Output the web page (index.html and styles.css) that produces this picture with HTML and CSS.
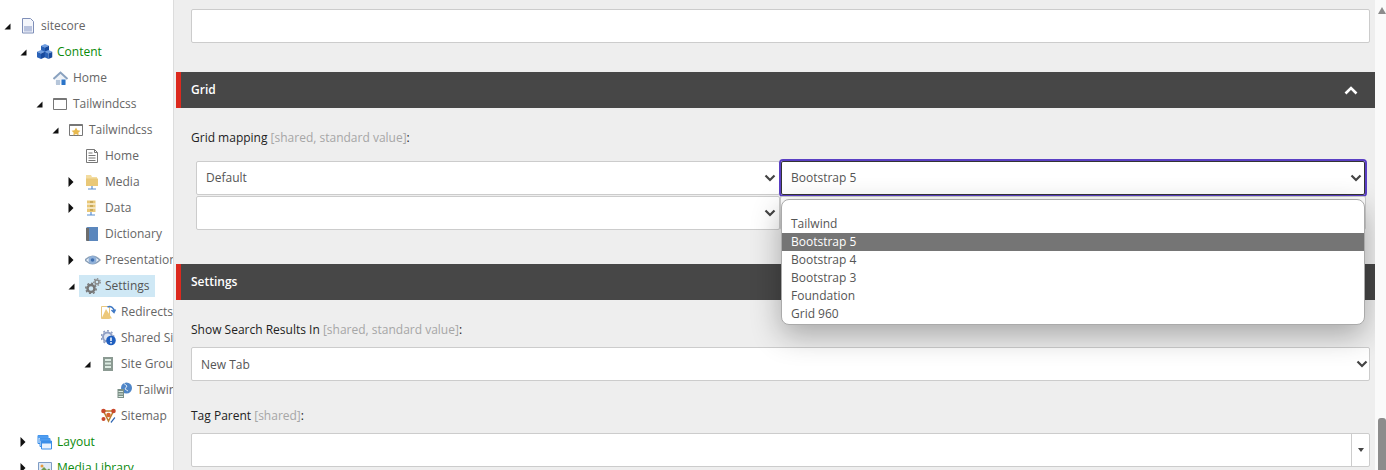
FILE: index.html
```html
<!DOCTYPE html>
<html lang="en">
<head>
    <meta charset="UTF-8">
    <meta name="viewport" content="width=device-width, initial-scale=1.0">
    <title>Content Editor</title>
    <link rel="stylesheet" href="styles.css">
</head>
<body>
<svg class="defs" width="0" height="0">
    <symbol id="chev-down" viewBox="0 0 12 8"><path d="M1.500 1.500 6 6l4.500-4.500" fill="none" stroke="#444" stroke-width="2.200"/></symbol>
    <symbol id="chev-up" viewBox="0 0 14 9"><path d="M1.500 7.500 7 2l5.500 5.500" fill="none" stroke="#fff" stroke-width="2.600"/></symbol>
    <symbol id="open" viewBox="0 0 7 7"><path d="M6.500 0.500v6h-6z" fill="#111"/></symbol>
    <symbol id="closed" viewBox="0 0 6 10"><path d="M0.500 0 5.500 5 0.500 10z" fill="#111"/></symbol>
    <symbol id="stand" viewBox="0 0 16 16"><path d="M8 12v3M4 15h8" stroke="#5b8fd0" stroke-width="1.200" fill="none"/></symbol>
    <symbol id="cube" viewBox="0 0 8 9"><path d="M4 0l4 1.700-4 1.700-4-1.700z" fill="#6f9de0"/><path d="M0 1.700l4 1.700V9L0 7.300z" fill="#2a62b8"/><path d="M8 1.700L4 3.400V9l4-1.700z" fill="#174a9e"/></symbol>
</svg>

<div class="page">
    <!-- content tree -->
    <nav class="tree">
        <div class="row level-0">
            <span class="toggle"><svg width="7" height="7"><use href="#open"/></svg></span>
            <span class="node"><svg width="16" height="16" viewBox="0 0 16 16"><path d="M1.500 0.500h8l3 3v11.500h-11z" fill="#f4f6fb" stroke="#7f8fb8"/><path d="M3 8h8v5.500H3z" fill="#b9c3de"/></svg>sitecore</span>
        </div>
        <div class="row level-1">
            <span class="toggle"><svg width="7" height="7"><use href="#open"/></svg></span>
            <span class="node green"><svg width="16" height="16" viewBox="0 0 16 16"><use href="#cube" x="4" y="0" width="8" height="9"/><use href="#cube" x="0" y="6" width="8" height="9"/><use href="#cube" x="7.500" y="6" width="8" height="9"/></svg>Content</span>
        </div>
        <div class="row level-2">
            <span class="toggle"></span>
            <span class="node"><svg width="16" height="16" viewBox="0 0 16 16"><path d="M2.500 8 7.500 3.500 13 8v6H2.500z" fill="#eef2f7"/><path d="M0.500 9 7.500 2.500 14.500 9" fill="none" stroke="#8aa2bf" stroke-width="2"/><path d="M8.500 9.500h4V15h-4z" fill="#2b74c8"/><path d="M3 10h4v5H3z" fill="#b6c6da"/></svg>Home</span>
        </div>
        <div class="row level-2">
            <span class="toggle"><svg width="7" height="7"><use href="#open"/></svg></span>
            <span class="node"><svg width="16" height="16" viewBox="0 0 16 16"><path d="M0.500 2.500h13v11h-13z" fill="#fff" stroke="#777"/><path d="M0.500 2.500h13v1.500H0.500z" fill="#777"/></svg>Tailwindcss</span>
        </div>
        <div class="row level-3">
            <span class="toggle"><svg width="7" height="7"><use href="#open"/></svg></span>
            <span class="node"><svg width="16" height="16" viewBox="0 0 16 16"><path d="M0.500 2.500h13v11h-13z" fill="#fff" stroke="#777"/><path d="M0.500 2.500h13v1.500H0.500z" fill="#777"/><path d="m7 5.500 1.500 2.800 2.900.4-2.100 2 .5 2.800L7 12.100l-2.800 1.400.5-2.800-2.100-2 2.900-.4z" fill="#e8b94e"/></svg>Tailwindcss</span>
        </div>
        <div class="row level-4">
            <span class="toggle"></span>
            <span class="node"><svg width="16" height="16" viewBox="0 0 16 16"><path d="M1.500 1.500h8l3 3v10h-11z" fill="#fff" stroke="#777"/><path d="M9.500 1.500v3h3M3.500 5h4M3.500 7.500h7M3.500 10h7M3.500 12.500h7" fill="none" stroke="#777"/></svg>Home</span>
        </div>
        <div class="row level-4">
            <span class="toggle"><svg width="6" height="10"><use href="#closed"/></svg></span>
            <span class="node"><svg width="16" height="16" viewBox="0 0 16 16"><path d="M1 1h5l1 2h5v9H1z" fill="#f3dca0"/><path d="M1 4.500h12v7.500H1z" fill="#e9c878"/><use href="#stand" x="-1" width="16" height="16"/></svg>Media</span>
        </div>
        <div class="row level-4">
            <span class="toggle"><svg width="6" height="10"><use href="#closed"/></svg></span>
            <span class="node"><svg width="16" height="16" viewBox="0 0 16 16"><path d="M2 0.500h8.500v11.500H2z" fill="#e9c878"/><path d="M2 4h8.500M2 8h8.500" stroke="#fff"/><path d="M5 2h3M5 6h3M5 10h3" stroke="#a98a3a"/><use href="#stand" x="-2" width="16" height="16"/></svg>Data</span>
        </div>
        <div class="row level-4">
            <span class="toggle"></span>
            <span class="node"><svg width="16" height="16" viewBox="0 0 16 16"><path d="M1 2.500Q1 1 2.500 1H13v14H2.500Q1 15 1 13.500z" fill="#5b87bd"/><path d="M1 2h3v13H2.500Q1 15 1 13.500z" fill="#6d6d6d"/></svg>Dictionary</span>
        </div>
        <div class="row level-4">
            <span class="toggle"><svg width="6" height="10"><use href="#closed"/></svg></span>
            <span class="node"><svg width="16" height="16" viewBox="0 0 16 16"><path d="M0 8Q7.500 0.500 15 8 7.500 15.500 0 8z" fill="#eef3fa" stroke="#8ba0b8" stroke-width="1.400"/><circle cx="7.500" cy="8" r="4" fill="#8fb0d8"/><circle cx="7.500" cy="8" r="1.800" fill="#3f6fb0"/></svg>Presentation</span>
        </div>
        <div class="row level-4">
            <span class="toggle"><svg width="7" height="7"><use href="#open"/></svg></span>
            <span class="node selected"><svg width="16" height="16" viewBox="0 0 16 16"><circle cx="6" cy="10.500" r="3.500" fill="none" stroke="#777" stroke-width="2.500"/><circle cx="6" cy="10.500" r="5.200" fill="none" stroke="#777" stroke-width="1.500" stroke-dasharray="2 2"/><circle cx="12" cy="4" r="2" fill="none" stroke="#888" stroke-width="1.500"/><circle cx="12" cy="4" r="3.300" fill="none" stroke="#888" stroke-width="1.200" stroke-dasharray="1.500 1.500"/></svg>Settings</span>
        </div>
        <div class="row level-5">
            <span class="toggle"></span>
            <span class="node"><svg width="16" height="16" viewBox="0 0 16 16"><path d="M0.500 2.500h8v12h-8z" fill="#fff" stroke="#e8c880"/><path d="M0.500 14.500 5 5l6 9.500z" fill="#edc97a"/><path d="M6.500 3a4.500 4.500 0 0 1 6.500 4.500M14.500 5.500l-1.500 3-2.500-2.500" fill="none" stroke="#3f78c4" stroke-width="1.500"/></svg>Redirects</span>
        </div>
        <div class="row level-5">
            <span class="toggle"></span>
            <span class="node"><svg width="16" height="16" viewBox="0 0 16 16"><circle cx="6.500" cy="7" r="4.500" fill="#dfe5f2" stroke="#8f9fc4" stroke-width="2"/><circle cx="6.500" cy="7" r="6.200" fill="none" stroke="#8f9fc4" stroke-width="1.500" stroke-dasharray="2 2"/><circle cx="10" cy="10.500" r="4.800" fill="#1f5fc0"/><path d="M10 7.500v3.500M10 12v1.500" stroke="#fff" stroke-width="1.500"/></svg>Shared Site</span>
        </div>
        <div class="row level-5">
            <span class="toggle"><svg width="7" height="7"><use href="#open"/></svg></span>
            <span class="node"><svg width="16" height="16" viewBox="0 0 16 16"><path d="M2 1h10v14H2z" fill="#8b9a92"/><path d="M4 3h6v2H4zM4 6.500h6v2H4zM4 10h6v2H4z" fill="#dcebe2"/></svg>Site Group</span>
        </div>
        <div class="row level-6">
            <span class="toggle"></span>
            <span class="node"><svg width="16" height="16" viewBox="0 0 16 16"><circle cx="9.500" cy="6" r="5.500" fill="#4f86c8"/><path d="M7 1.500 10 4 8 7l3 2" fill="none" stroke="#dce8f5"/><path d="M0.500 7h6.500v9H0.500z" fill="#7b8f86"/><path d="M1.500 9h4.500v1H1.500zM1.500 11.500h4.500v1H1.500zM1.500 14h4.500v1H1.500z" fill="#dcebe2"/></svg>Tailwind</span>
        </div>
        <div class="row level-5">
            <span class="toggle"></span>
            <span class="node"><svg width="16" height="16" viewBox="0 0 16 16"><path d="M2.500 3h10L7.500 13z" fill="none" stroke="#b9812f" stroke-width="1.500"/><circle cx="2.500" cy="3" r="2.300" fill="#c9492c"/><circle cx="12.500" cy="3" r="2.300" fill="#c9492c"/><circle cx="7.500" cy="7" r="2.300" fill="#d8622f"/><circle cx="2.500" cy="11" r="2" fill="#c9492c"/><path d="m9.500 14 4-5 .8 1-4 5z" fill="#2b62b0"/></svg>Sitemap</span>
        </div>
        <div class="row level-1">
            <span class="toggle"><svg width="6" height="10"><use href="#closed"/></svg></span>
            <span class="node green"><svg width="16" height="16" viewBox="0 0 16 16"><path d="M1 1.500h10v8H1z" fill="#e8f2fd" stroke="#3a8ee8"/><path d="M1 1.500h10v2.500H1z" fill="#4f9df0"/><path d="M3 4.500h10v8H3z" fill="#e8f2fd" stroke="#3a8ee8"/><path d="M3 4.500h10v2.500H3z" fill="#4f9df0"/><path d="M4.500 7h10v8h-10z" fill="#e8f2fd" stroke="#3a8ee8"/><path d="M4.500 7h10v2.500h-10z" fill="#3a8ee8"/></svg>Layout</span>
        </div>
        <div class="row level-1">
            <span class="toggle"><svg width="6" height="10"><use href="#closed"/></svg></span>
            <span class="node green"><svg width="16" height="16" viewBox="0 0 16 16"><path d="M1.500 2.500h13v11h-13z" fill="#dfe9f5" stroke="#7f9cc4"/><path d="M3 11 7 7l3 3 2-1.500 2 2.500v1.500H3z" fill="#6f9a4e"/><circle cx="5" cy="6" r="1.500" fill="#e89a3a"/></svg>Media Library</span>
        </div>
    </nav>

    <!-- editor -->
    <main class="editor">
        <div class="field top-field"></div>

        <section class="section">
            <div class="section-head">
                <span>Grid</span>
                <svg width="14" height="9"><use href="#chev-up"/></svg>
            </div>
            <div class="section-body">
                <div class="label">Grid mapping <span class="muted">[shared, standard value]</span>:</div>
                <div class="mapping">
                    <div class="field select">Default<svg width="12" height="8"><use href="#chev-down"/></svg></div>
                    <div class="field select focused">Bootstrap 5<svg width="12" height="8"><use href="#chev-down"/></svg>
                        <ul class="dropdown">
                            <li>Tailwind</li>
                            <li class="active">Bootstrap 5</li>
                            <li>Bootstrap 4</li>
                            <li>Bootstrap 3</li>
                            <li>Foundation</li>
                            <li>Grid 960</li>
                        </ul>
                    </div>
                    <div class="field select"><svg width="12" height="8"><use href="#chev-down"/></svg></div>
                    <div class="field select"><svg width="12" height="8"><use href="#chev-down"/></svg></div>
                </div>
            </div>
        </section>

        <section class="section">
            <div class="section-head">
                <span>Settings</span>
            </div>
            <div class="section-body">
                <div class="label">Show Search Results In <span class="muted">[shared, standard value]</span>:</div>
                <div class="field select wide"><span class="value">New Tab</span><svg width="12" height="8"><use href="#chev-down"/></svg></div>
                <div class="label next">Tag Parent <span class="muted">[shared]</span>:</div>
                <div class="field combo">
                    <span class="combo-btn"></span>
                </div>
            </div>
        </section>
    </main>

    <div class="scrollbar">
        <span class="scroll-up"></span>
        <span class="scroll-thumb"></span>
    </div>
</div>
</body>
</html>
```

FILE: styles.css
```css
html, body {
    margin: 0;
    padding: 0;
    height: 470px;
    overflow: hidden;
}
body {
    font-family: "Open Sans", "Liberation Sans", sans-serif;
    font-size: 12px;
    line-height: 16px;
    color: #222;
    background-color: #fff;
}
.defs {
    position: absolute;
}
.page {
    display: flex;
    height: 470px;
}

/* tree */
.tree {
    width: 173px;
    height: 470px;
    flex-shrink: 0;
    padding-top: 13px;
    box-sizing: border-box;
    overflow: hidden;
    background-color: #fff;
    color: #666;
}
.row {
    display: flex;
    align-items: center;
    height: 26px;
    white-space: nowrap;
}
.level-0 { padding-left: 0; }
.level-1 { padding-left: 16px; }
.level-2 { padding-left: 32px; }
.level-3 { padding-left: 48px; }
.level-4 { padding-left: 64px; }
.level-5 { padding-left: 80px; }
.level-6 { padding-left: 96px; }
.toggle {
    width: 15px;
    flex-shrink: 0;
    display: flex;
    align-items: center;
    padding-left: 4px;
    box-sizing: border-box;
}
.node {
    display: flex;
    align-items: center;
    gap: 4px;
    height: 22px;
    padding: 0 5px 0 6px;
}
.node svg {
    flex-shrink: 0;
}
.green {
    color: #0a8a0a;
}
.selected {
    background-color: #cfe8f5;
    color: #555;
}

/* editor */
.editor {
    flex: 1;
    min-width: 0;
    height: 470px;
    padding: 9px 0 0 2px;
    box-sizing: border-box;
    overflow: hidden;
    background-color: #eee;
    border-left: 1px solid #dcdcdc;
}
.field {
    height: 34px;
    box-sizing: border-box;
    background-color: #fff;
    border: 1px solid #ccc;
    border-radius: 2px;
}
.top-field {
    margin: 0 5px 29px 15px;
}
.section-head {
    display: flex;
    justify-content: space-between;
    align-items: center;
    height: 36px;
    padding: 0 17px 0 10px;
    box-sizing: border-box;
    background-color: #474747;
    border-left: 5px solid #dc291e;
    color: #fff;
    font-weight: 600;
}
.section-body {
    padding: 22px 5px 34px 15px;
}
.label {
    margin-bottom: 9px;
}
.label.next {
    margin-top: 27px;
}
.muted {
    color: #a6a6a6;
}
.mapping {
    display: grid;
    grid-template-columns: 584px 586px;
    gap: 1px 0;
    margin: 15px 0 0 5px;
}
.select {
    position: relative;
    display: flex;
    align-items: center;
    padding: 0 3px 0 9px;
    color: #555;
}
.select svg {
    margin-left: auto;
}
.value {
    padding-top: 2px;
}
.focused {
    margin: 0 1px;
    padding: 0 2px 0 9px;
    border-color: #333;
    outline: 2px solid #5a3fc4;
}
.wide {
    padding-right: 1px;
}
.dropdown {
    position: absolute;
    top: 37px;
    left: -1px;
    width: 584px;
    box-sizing: border-box;
    margin: 0;
    padding: 15px 0 1px;
    list-style: none;
    background-color: #fff;
    border: 1px solid #aaa;
    border-radius: 8px;
    box-shadow: 0 10px 30px rgba(0, 0, 0, 0.3);
    overflow: hidden;
    z-index: 2;
}
.dropdown li {
    height: 18px;
    line-height: 18px;
    padding-left: 9px;
}
.dropdown .active {
    background-color: #757575;
    color: #fff;
}
.combo {
    position: relative;
    display: flex;
    justify-content: flex-end;
}
.combo-btn {
    width: 17px;
    display: flex;
    align-items: center;
    justify-content: center;
    border-left: 1px solid #ccc;
}
.combo-btn::after {
    content: "";
    border-style: solid;
    border-width: 4px 3.5px 0;
    border-color: #444 transparent transparent;
}

/* scrollbar */
.scrollbar {
    width: 11px;
    height: 470px;
    flex-shrink: 0;
    display: flex;
    flex-direction: column;
    justify-content: space-between;
    align-items: flex-end;
    background-color: #fafafa;
}
.scroll-up {
    width: 0;
    height: 0;
    margin-top: 7px;
    border-style: solid;
    border-width: 0 4px 7px;
    border-color: transparent transparent #8c8c8c;
}
.scroll-thumb {
    width: 8px;
    height: 52px;
    background-color: #8c8c8c;
    border-radius: 3px 3px 0 0;
}
```
